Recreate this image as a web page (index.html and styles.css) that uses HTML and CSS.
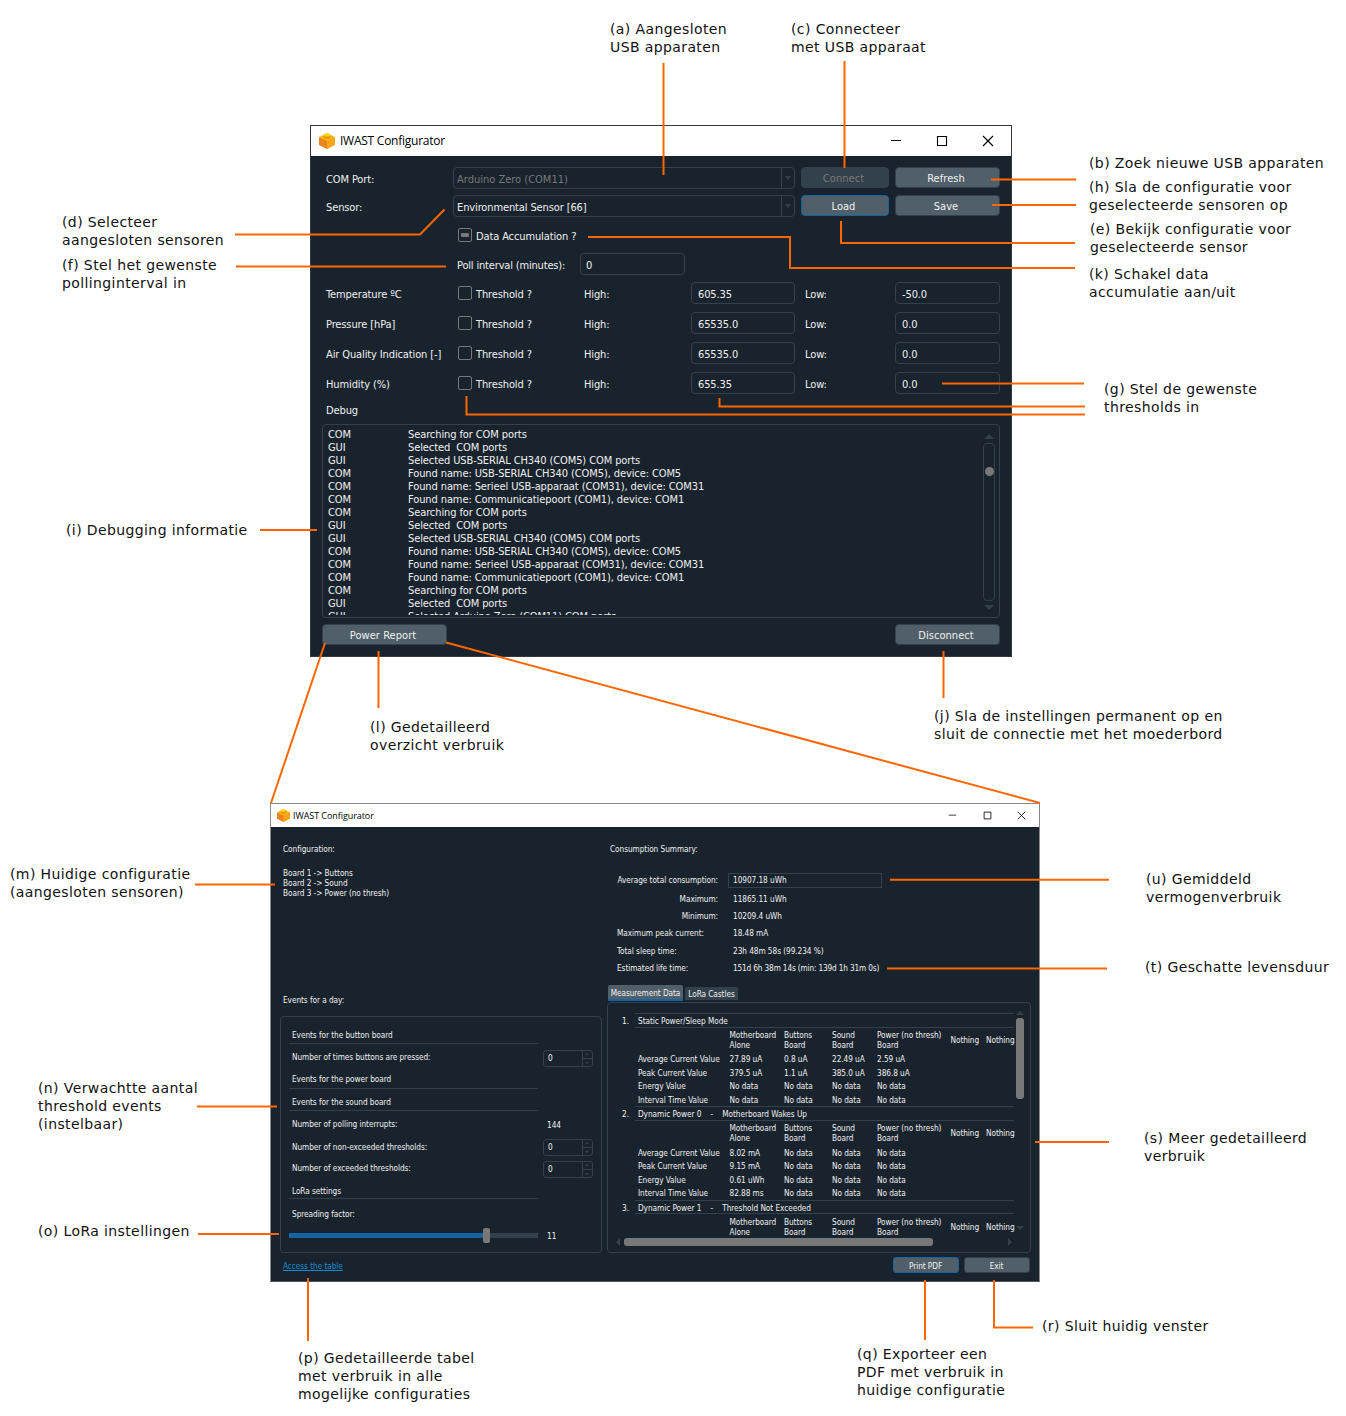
FILE: index.html
```html
<!DOCTYPE html>
<html lang="nl">
<head>
<meta charset="utf-8">
<title>IWAST Configurator</title>
<link rel="stylesheet" href="styles.css">
</head>
<body>
<svg class="defs" width="0" height="0" aria-hidden="true">
  <symbol id="brick" viewBox="0 0 16 16">
    <path d="M0 4.2 8 .6l8 3.6v7.6L8 16l-8-4.2z" fill="#f5a01a"/>
    <path d="M0 4.2 8 8v8l-8-4.2z" fill="#ea8320"/>
    <path d="M8 8l8-3.8v7.6L8 16z" fill="#f9a51a"/>
    <path d="M0 4.2 8 .6l8 3.6L8 8z" fill="#fbb917"/>
    <path d="M4.400 2v2.200C5.500 6.200 10.500 6.200 11.600 4.200V2z" fill="#e8960c"/>
    <ellipse cx="8" cy="1.900" rx="3.600" ry="1.700" fill="#ffd21c"/>
  </symbol>
  <symbol id="min" viewBox="0 0 12 12"><path d="M1 5.500h10" stroke="#000" fill="none"/></symbol>
  <symbol id="max" viewBox="0 0 12 12"><path d="M1.500 1.500h9v9h-9z" stroke="#000" fill="none" stroke-width="1.100"/></symbol>
  <symbol id="close" viewBox="0 0 12 12"><path d="M1 1l10 10M11 1L1 11" stroke="#000" fill="none" stroke-width="1.100"/></symbol>
</svg>
<main class="canvas">

  <section class="window main-window">
    <header class="titlebar">
      <svg class="logo"><use href="#brick"/></svg><span class="title">IWAST Configurator</span>
      <svg class="ctl"><use href="#min"/></svg><svg class="ctl"><use href="#max"/></svg><svg class="ctl"><use href="#close"/></svg>
    </header>
    <div class="form">
      <span class="c1">COM Port:</span><div class="combo off">Arduino Zero (COM11)<i class="drop"></i></div><button class="btn mid off">Connect</button><button class="btn last">Refresh</button>
      <span class="c1">Sensor:</span><div class="combo">Environmental Sensor [66]<i class="drop"></i></div><button class="btn mid focus">Load</button><button class="btn last">Save</button>
      <label class="check wide"><i class="box partial"></i><span>Data Accumulation ?</span></label>
      <span class="poll">Poll interval (minutes):</span><div class="field poll-field">0</div>
      <span class="c1">Temperature ºC</span><label class="check"><i class="box"></i><span>Threshold ?</span></label><span class="high">High:</span><div class="field">605.35</div><span class="low">Low:</span><div class="field">-50.0</div>
      <span class="c1">Pressure [hPa]</span><label class="check"><i class="box"></i><span>Threshold ?</span></label><span class="high">High:</span><div class="field">65535.0</div><span class="low">Low:</span><div class="field">0.0</div>
      <span class="c1">Air Quality Indication [-]</span><label class="check"><i class="box"></i><span>Threshold ?</span></label><span class="high">High:</span><div class="field">65535.0</div><span class="low">Low:</span><div class="field">0.0</div>
      <span class="c1">Humidity (%)</span><label class="check"><i class="box"></i><span>Threshold ?</span></label><span class="high">High:</span><div class="field">655.35</div><span class="low">Low:</span><div class="field">0.0</div>
      <span class="c1 debug-label">Debug</span>
    </div>
    <div class="debug">
      <div class="log">
        <span>COM</span><span>Searching for COM ports</span>
        <span>GUI</span><span>Selected  COM ports</span>
        <span>GUI</span><span>Selected USB-SERIAL CH340 (COM5) COM ports</span>
        <span>COM</span><span>Found name: USB-SERIAL CH340 (COM5), device: COM5</span>
        <span>COM</span><span>Found name: Serieel USB-apparaat (COM31), device: COM31</span>
        <span>COM</span><span>Found name: Communicatiepoort (COM1), device: COM1</span>
        <span>COM</span><span>Searching for COM ports</span>
        <span>GUI</span><span>Selected  COM ports</span>
        <span>GUI</span><span>Selected USB-SERIAL CH340 (COM5) COM ports</span>
        <span>COM</span><span>Found name: USB-SERIAL CH340 (COM5), device: COM5</span>
        <span>COM</span><span>Found name: Serieel USB-apparaat (COM31), device: COM31</span>
        <span>COM</span><span>Found name: Communicatiepoort (COM1), device: COM1</span>
        <span>COM</span><span>Searching for COM ports</span>
        <span>GUI</span><span>Selected  COM ports</span>
        <span>GUI</span><span>Selected Arduino Zero (COM11) COM ports</span>
      </div>
      <div class="scroll"><i class="tri up"></i><div class="track"><i class="knob"></i></div><i class="tri down"></i></div>
    </div>
    <footer class="actions"><button class="btn report">Power Report</button><button class="btn disconnect">Disconnect</button></footer>
  </section>

  <section class="window report-window">
    <header class="titlebar">
      <svg class="logo"><use href="#brick"/></svg><span class="title">IWAST Configurator</span>
      <svg class="ctl"><use href="#min"/></svg><svg class="ctl"><use href="#max"/></svg><svg class="ctl"><use href="#close"/></svg>
    </header>
    <div class="columns">
      <div class="left">
        <p class="heading">Configuration:</p>
        <div class="boards"><div>Board 1 -&gt; Buttons</div><div>Board 2 -&gt; Sound</div><div>Board 3 -&gt; Power (no thresh)</div></div>
        <p class="heading">Events for a day:</p>
        <div class="events">
          <div class="group g1">Events for the button board</div>
          <div class="row r1"><span>Number of times buttons are pressed:</span><div class="spin">0<i></i></div></div>
          <div class="group g2">Events for the power board</div>
          <div class="group g3">Events for the sound board</div>
          <div class="row r2"><span>Number of polling interrupts:</span><b>144</b></div>
          <div class="row r3"><span>Number of non-exceeded thresholds:</span><div class="spin">0<i></i></div></div>
          <div class="row r4"><span>Number of exceeded thresholds:</span><div class="spin">0<i></i></div></div>
          <div class="group g4">LoRa settings</div>
          <div class="row r5"><span>Spreading factor:</span></div>
          <div class="row r6"><div class="slider"><i class="fill"></i><i class="handle"></i><i class="rest"></i></div><b>11</b></div>
        </div>
        <a class="link">Access the table</a>
      </div>
      <div class="right">
        <p class="heading">Consumption Summary:</p>
        <div class="summary">
          <span class="r">Average total consumption:</span><div class="value boxed">10907.18 uWh</div>
          <span class="r">Maximum:</span><div class="value">11865.11 uWh</div>
          <span class="r">Minimum:</span><div class="value">10209.4 uWh</div>
          <span>Maximum peak current:</span><div class="value">18.48 mA</div>
          <span>Total sleep time:</span><div class="value">23h 48m 58s (99.234 %)</div>
          <span>Estimated life time:</span><div class="value long">151d 6h 38m 14s (min: 139d 1h 31m 0s)</div>
        </div>
        <div class="tabs"><span class="tab on">Measurement Data</span><span class="tab">LoRa Castles</span></div>
        <div class="panel">
          <div class="view">
            <div class="block">
              <span class="num">1.</span><div class="name">Static Power/Sleep Mode</div>
              <div class="grid">
                <i></i><span>Motherboard<br>Alone</span><span>Buttons<br>Board</span><span>Sound<br>Board</span><span>Power (no thresh)<br>Board</span><span>Nothing</span><span>Nothing</span>
                <span>Average Current Value</span><span>27.89 uA</span><span>0.8 uA</span><span>22.49 uA</span><span class="end">2.59 uA</span>
                <span>Peak Current Value</span><span>379.5 uA</span><span>1.1 uA</span><span>385.0 uA</span><span class="end">386.8 uA</span>
                <span>Energy Value</span><span>No data</span><span>No data</span><span>No data</span><span class="end">No data</span>
                <span>Interval Time Value</span><span>No data</span><span>No data</span><span>No data</span><span class="end">No data</span>
              </div>
            </div>
            <div class="block">
              <span class="num">2.</span><div class="name">Dynamic Power 0 &nbsp; &nbsp;- &nbsp; &nbsp;Motherboard Wakes Up</div>
              <div class="grid">
                <i></i><span>Motherboard<br>Alone</span><span>Buttons<br>Board</span><span>Sound<br>Board</span><span>Power (no thresh)<br>Board</span><span>Nothing</span><span>Nothing</span>
                <span>Average Current Value</span><span>8.02 mA</span><span>No data</span><span>No data</span><span class="end">No data</span>
                <span>Peak Current Value</span><span>9.15 mA</span><span>No data</span><span>No data</span><span class="end">No data</span>
                <span>Energy Value</span><span>0.61 uWh</span><span>No data</span><span>No data</span><span class="end">No data</span>
                <span>Interval Time Value</span><span>82.88 ms</span><span>No data</span><span>No data</span><span class="end">No data</span>
              </div>
            </div>
            <div class="block">
              <span class="num">3.</span><div class="name">Dynamic Power 1 &nbsp; &nbsp;- &nbsp; &nbsp;Threshold Not Exceeded</div>
              <div class="grid">
                <i></i><span>Motherboard<br>Alone</span><span>Buttons<br>Board</span><span>Sound<br>Board</span><span>Power (no thresh)<br>Board</span><span>Nothing</span><span>Nothing</span>
              </div>
            </div>
          </div>
          <div class="vbar"><i class="tri up"></i><i class="thumb"></i><i class="tri down"></i></div>
          <div class="hbar"><i class="tri lft"></i><i class="thumb"></i><i class="tri rgt"></i></div>
        </div>
        <footer class="buttons"><button class="btn focus">Print PDF</button><button class="btn">Exit</button></footer>
      </div>
    </div>
  </section>

  <svg class="lines" viewBox="0 0 1346 1416" width="1346" height="1416">
    <path d="M663.500 63V175M844.500 61V168M991 179.500H1076M992 205H1076M841 221V243H1075M588 237H790V268H1075"/>
    <path d="M235 234.500H420L444.500 209.500M236 266.500H446M942 383.500H1084M719.500 398V406.500H1085M466.500 396V414.500H1085M260 530H317"/>
    <path d="M378.500 651V708M943.500 651V698M325 643L271 803M446 642.500L1040 803M195 884.500H275M890 879.700H1109M887 968.500H1107"/>
    <path d="M197 1106.500H277M1035 1142H1109M198 1234H279M308 1278V1341M925 1280V1340M994 1280V1327.500H1033"/>
  </svg>

  <p class="note" style="left:610px;top:20px">(a) Aangesloten<br>USB apparaten</p>
  <p class="note" style="left:791px;top:20px">(c) Connecteer<br>met USB apparaat</p>
  <p class="note" style="left:1089px;top:154px">(b) Zoek nieuwe USB apparaten</p>
  <p class="note" style="left:1089px;top:178px">(h) Sla de configuratie voor<br>geselecteerde sensoren op</p>
  <p class="note" style="left:1090px;top:220px">(e) Bekijk configuratie voor<br>geselecteerde sensor</p>
  <p class="note" style="left:1089px;top:265px">(k) Schakel data<br>accumulatie aan/uit</p>
  <p class="note" style="left:1104px;top:380px">(g) Stel de gewenste<br>thresholds in</p>
  <p class="note" style="left:62px;top:213px">(d) Selecteer<br>aangesloten sensoren</p>
  <p class="note" style="left:62px;top:256px">(f) Stel het gewenste<br>pollinginterval in</p>
  <p class="note" style="left:66px;top:521px">(i) Debugging informatie</p>
  <p class="note" style="left:370px;top:718px">(l) Gedetailleerd<br>overzicht verbruik</p>
  <p class="note" style="left:934px;top:707px">(j) Sla de instellingen permanent op en<br>sluit de connectie met het moederbord</p>
  <p class="note" style="left:10px;top:865px">(m) Huidige configuratie<br>(aangesloten sensoren)</p>
  <p class="note" style="left:1146px;top:870px">(u) Gemiddeld<br>vermogenverbruik</p>
  <p class="note" style="left:1145px;top:958px">(t) Geschatte levensduur</p>
  <p class="note" style="left:38px;top:1079px">(n) Verwachtte aantal<br>threshold events<br>(instelbaar)</p>
  <p class="note" style="left:1144px;top:1129px">(s) Meer gedetailleerd<br>verbruik</p>
  <p class="note" style="left:38px;top:1222px">(o) LoRa instellingen</p>
  <p class="note" style="left:298px;top:1349px">(p) Gedetailleerde tabel<br>met verbruik in alle<br>mogelijke configuraties</p>
  <p class="note" style="left:857px;top:1345px">(q) Exporteer een<br>PDF met verbruik in<br>huidige configuratie</p>
  <p class="note" style="left:1042px;top:1317px">(r) Sluit huidig venster</p>
</main>
</body>
</html>
```
FILE: styles.css
```css
* { box-sizing: border-box; }
body { margin: 0; background: #fff; }
p { margin: 0; }
i, b { font-style: normal; font-weight: normal; }
.defs { position: absolute; }
.canvas { position: relative; width: 1346px; height: 1416px; overflow: hidden; }
.lines { position: absolute; left: 0; top: 0; fill: none; stroke: #ff6600; stroke-width: 2; }
.note { position: absolute; font: 14px/18px "DejaVu Sans", sans-serif; color: #111; white-space: nowrap; letter-spacing: .39px; }

.window {
  position: absolute; background: #19232d; color: #f0f0f0; white-space: nowrap;
  font-family: "DejaVu Sans Condensed", "DejaVu Sans", sans-serif; font-stretch: condensed;
}
.titlebar { display: flex; align-items: center; background: #fff; color: #000; font-family: "Open Sans", sans-serif; font-stretch: normal; }
.title { flex: 1; }
.btn {
  font: inherit; letter-spacing: inherit; color: #f0f0f0; background: #505f69; border: 1px solid #32414b;
  border-radius: 4px; padding: 0 3px 0 0; text-align: center;
}
.btn.focus { border-color: #1464a0; }
.btn.off { background: #32414b; color: #787878; }
.tri { display: block; width: 0; height: 0; border: 5px solid transparent; }
.tri.up { border-top: 0; border-bottom-color: #32414b; }
.tri.down { border-bottom: 0; border-top-color: #32414b; }
.tri.lft { border-left: 0; border-right-color: #32414b; }
.tri.rgt { border-right: 0; border-left-color: #32414b; }

/* Main window */
.main-window { left: 310px; top: 125px; width: 702px; height: 532px; border: 1px solid #35393d; font-size: 11px; letter-spacing: -.12px; }
.main-window .titlebar { height: 30px; padding: 0 17px 1px 8px; font-size: 12px; letter-spacing: -.25px; }
.main-window .logo { width: 16px; height: 16px; margin-right: 5px; }
.main-window .ctl { width: 12px; height: 12px; margin-left: 34px; }
.form {
  display: grid; align-items: center; padding: 8px 11px 0 15px;
  grid-template-columns: 127px 127px 111px 104px 100px 105px;
  grid-template-rows: 28px 28px 30px 28px 30px 30px 30px 30px 24px;
}
.form > span, .check > span { padding-top: 2px; }
.form > .debug-label { padding-top: 0; }
.c1 { grid-column: 1; }
.combo { grid-column: 2 / 5; position: relative; height: 22px; line-height: 22px; padding-left: 3px; border: 1px solid #32414b; border-radius: 4px; }
.combo, .field { padding-top: 1px; }
.combo.off { color: #787878; letter-spacing: 0; }
.drop { position: absolute; right: 0; top: 0; width: 13px; height: 20px; border-left: 1px solid #32414b; }
.drop::after { content: ""; position: absolute; left: 3px; top: 8px; border: 3.500px solid transparent; border-top: 4px solid #32414b; border-bottom: 0; }
.main-window .btn { height: 21px; letter-spacing: .05px; }
.form .btn { margin-bottom: 1px; padding-top: 1px; }
.mid { margin: 0 6px; }
.check { grid-column: 2; display: flex; align-items: center; gap: 4px; padding-left: 5px; }
.check.wide { grid-column: 2 / 4; }
.box { width: 14px; height: 14px; border: 1px solid #787878; border-radius: 2px; padding: 4px 2px; }
.box.partial::before { content: ""; display: block; width: 8px; height: 4px; background: #787878; border-radius: 1px; }
.poll { grid-column: 2; padding-left: 4px; letter-spacing: -.17px; }
.field { height: 22px; line-height: 22px; padding-left: 6px; border: 1px solid #32414b; border-radius: 4px; }
.poll-field { width: 105px; padding-left: 5px; }
.high { padding-left: 4px; }
.low { padding-left: 10px; }
.debug { display: flex; justify-content: space-between; height: 194px; margin: 2px 11px 0; padding: 3px 4px 2px 5px; border: 1px solid #32414b; border-radius: 4px; }
.log { display: grid; grid-template-columns: 80px auto; grid-auto-rows: 13px; line-height: 13px; height: 187px; overflow: hidden; white-space: pre; letter-spacing: -.1px; }
.scroll { display: flex; flex-direction: column; align-items: center; width: 12px; padding: 6px 0 5px; }
.track { flex: 1; width: 12px; margin: 4px 0; border: 1px solid #32414b; border-radius: 4px; padding: 23px 1px; }
.knob { display: block; width: 9px; height: 9px; margin-left: -.5px; border-radius: 50%; background: #787878; }
.actions { display: flex; justify-content: space-between; margin: 6px 11px 0; }
.actions .btn { padding-top: 1px; }
.report { width: 125px; }
.disconnect { width: 105px; }

/* Power report window */
.report-window { left: 270px; top: 803px; width: 770px; height: 479px; border: 1px solid #888; border-bottom-color: #555; font-size: 8.200px; line-height: 10px; letter-spacing: -.05px; }
.report-window .titlebar { height: 23px; padding: 0 13px 0 6px; font-size: 9px; letter-spacing: -.07px; }
.report-window .logo { width: 13px; height: 13px; margin-right: 3px; }
.report-window .ctl { width: 9px; height: 9px; margin-left: 25.500px; }
.columns { display: grid; grid-template-columns: 322px 424px; column-gap: 5px; padding-left: 9px; }
.left .heading { padding: 17px 0 0 3px; }
.boards { height: 127px; padding: 14px 0 0 3px; }
.left .heading + .events { margin-top: 11px; }
.boards + .heading { padding-top: 14px; }
.events { height: 237px; padding: 10px 8px; border: 1px solid #32414b; border-radius: 4px; }
.group { width: 249px; padding-left: 3px; border-bottom: 1px solid #32414b; }
.g1 { height: 17px; padding-top: 3px; }
.g2 { height: 17px; padding-top: 2px; }
.g3 { height: 22px; padding-top: 8px; }
.g4 { height: 17px; padding-top: 4px; }
.row { display: grid; grid-template-columns: 254px 50px; align-items: center; }
.row > span { padding: 0 0 2px 3px; }
.row b { padding-left: 4px; }
.r1 { height: 28px; }
.r2 { height: 28px; }
.r3 { height: 17px; }
.r4 { height: 26px; }
.r5 { height: 29px; }
.r5 > span { padding-bottom: 0; }
.r6 { height: 15px; }
.spin { position: relative; height: 17px; line-height: 15px; padding-left: 4px; border: 1px solid #32414b; border-radius: 3px; }
.spin i { position: absolute; right: 0; top: 0; width: 10px; height: 15px; border-left: 1px solid #32414b; background: linear-gradient(#32414b, #32414b) 0 7px / 100% 1px no-repeat; }
.spin i::before, .spin i::after { content: ""; position: absolute; left: 2px; border: 2.500px solid transparent; }
.spin i::before { top: 2px; border-top: 0; border-bottom-color: #32414b; }
.spin i::after { bottom: 2px; border-bottom: 0; border-top-color: #32414b; }
.slider { display: flex; align-items: center; width: 249px; }
.fill { width: 194px; height: 5px; background: #1464a0; }
.handle { width: 7px; height: 15px; border-radius: 2px; background: #787878; }
.rest { flex: 1; height: 5px; background: #32414b; }
.link { display: block; padding: 8px 0 0 3px; color: #148cd2; text-decoration: underline; }

.right .heading { padding: 17px 0 0 3px; height: 43px; }
.summary { display: grid; grid-template-columns: 101px 1fr; column-gap: 10px; padding-left: 10px; align-items: center; grid-template-rows: 20px 17px 17.500px 17.500px 17.500px 17.500px; }
.summary .r { text-align: right; }
.value { padding-left: 5px; }
.value.long { letter-spacing: -.15px; }
.value.boxed { width: 154px; height: 15px; line-height: 13px; border: 1px solid #32414b; padding-left: 4px; }
.tabs { display: flex; align-items: flex-end; gap: 2px; padding-left: 1px; height: 17px; margin-top: 8px; }
.tab { width: 53px; height: 13px; line-height: 14px; margin-bottom: 2px; text-align: center; background: #32414b; border-radius: 2px 2px 0 0; }
.tab.on { width: 75px; height: 16px; line-height: 17px; margin-bottom: 1px; background: #505f69; border-bottom: 2px solid #1464a0; }
.panel { display: grid; grid-template-columns: 396px 14px; grid-template-rows: 223px 14px; height: 251px; padding: 10px 5px 0 11px; border: 1px solid #32414b; border-radius: 4px; }
.view { overflow: hidden; }
.block { display: grid; grid-template-columns: 16px 379px; grid-template-rows: 14.500px auto; height: 93.300px; }
.num { padding: 3px 0 0 3px; }
.name { border-top: 1px solid #32414b; border-bottom: 1px solid #32414b; padding: 2px 0 0 3px; }
.grid { grid-column: 2; display: grid; grid-template-columns: 91.500px 54.500px 48px 45px 73.500px 35.500px 32px; grid-template-rows: 25px; grid-auto-rows: 13.500px; align-items: center; padding-left: 3px; }
.end { grid-column: 5 / 8; }
.vbar { display: flex; flex-direction: column; align-items: center; padding-left: 1px; margin-right: 5px; width: 14px; }
.vbar .tri, .hbar .tri { border-width: 4px; }
.vbar .up { border-top-width: 0; margin-top: -2px; }
.vbar .down { border-bottom-width: 0; margin-top: auto; margin-bottom: 6px; }
.vbar .thumb { width: 8px; height: 81px; margin-top: 3px; background: #787878; border-radius: 3px; }
.vbar > i { position: relative; left: -3px; }
.hbar { display: flex; align-items: center; height: 12px; margin-left: -3px; }
.hbar .lft { border-left-width: 0; margin-right: 4px; }
.hbar .rgt { border-right-width: 0; margin-left: 75px; }
.hbar .thumb { width: 309px; height: 8px; background: #787878; border-radius: 3px; flex: none; }
.buttons { display: flex; justify-content: flex-end; gap: 5px; margin-top: 4px; padding-right: 1px; }
.buttons .btn { width: 66px; height: 16px; border-radius: 3px; padding: 1px 1px 0 0; }
```
